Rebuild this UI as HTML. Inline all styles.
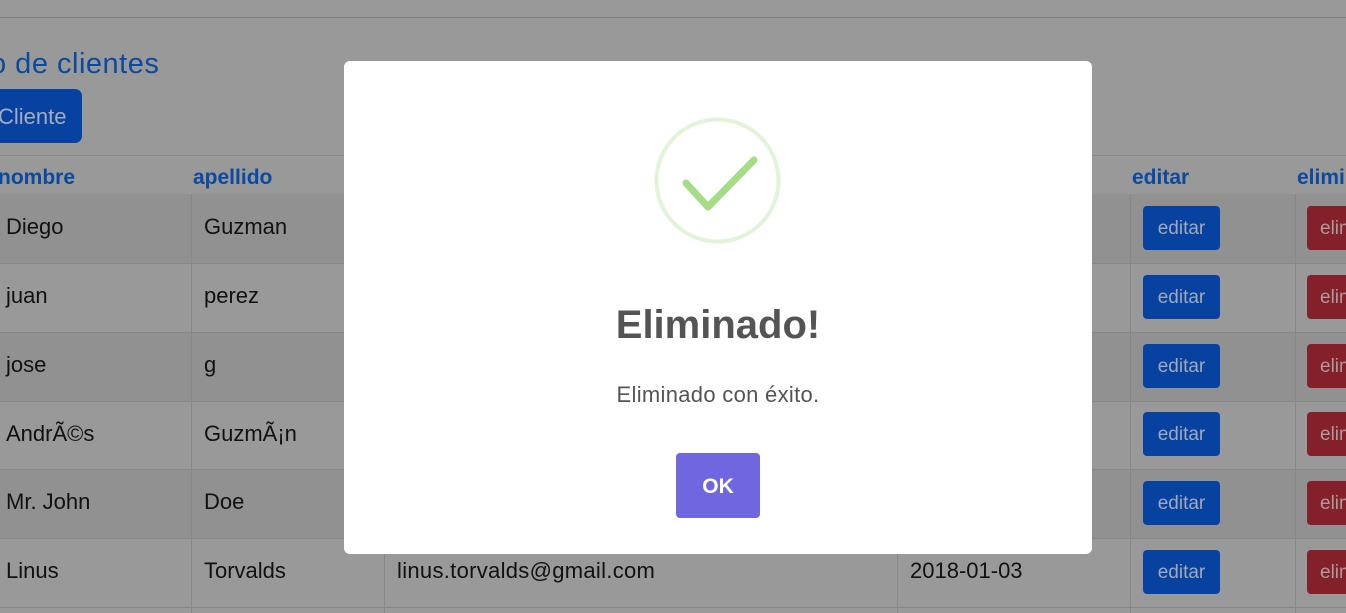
<!DOCTYPE html>
<html><head><meta charset="utf-8"><style>
*{box-sizing:border-box;margin:0;padding:0}
body{width:1346px;height:613px;overflow:hidden;background:#999;font-family:"Liberation Sans",sans-serif;position:relative}
.a{position:absolute;white-space:nowrap}
.hl{position:absolute;left:0;width:1346px;height:1px;background:#85888a}
.vl{position:absolute;width:1px;background:#85888a}
.row{position:absolute;left:0;width:1346px;height:69px}
.c{position:absolute;font-size:22px;color:#111;line-height:69px}
.th{position:absolute;top:162px;font-size:21px;font-weight:bold;color:#0b4aa0;line-height:32px}
.be{position:absolute;left:1143px;width:77px;height:44px;background:#0842a0;border-radius:4px;color:#9fa9bb;font-size:19px;text-align:center;line-height:46px}
.bd{position:absolute;left:1307px;width:60px;height:44px;background:#842029;border-radius:4px;color:#b09a9c;font-size:19px;line-height:46px;padding-left:13px}
</style></head><body>
<div class="hl" style="top:17px;background:#808080"></div>
<div class="a" style="left:-10px;top:48px;font-size:29px;color:#0b4aa0;letter-spacing:0.5px">o de clientes</div>
<div class="a" style="left:-20px;top:89px;width:102px;height:54px;background:#0842a0;border-radius:7px;color:#a3adc0;font-size:22px;line-height:56px;padding-left:18px">Cliente</div>
<div class="hl" style="top:155px"></div>
<div class="th" style="left:-2px">nombre</div>
<div class="th" style="left:193px">apellido</div>
<div class="th" style="left:1132px">editar</div>
<div class="th" style="left:1297px">elimi</div>
<div class="hl" style="top:194px"></div>

<div class="row" style="top:194px;background:#919191"></div>
<div class="row" style="top:332px;background:#919191"></div>
<div class="row" style="top:469px;background:#919191"></div>
<div class="hl" style="top:263px"></div><div class="hl" style="top:332px"></div><div class="hl" style="top:401px"></div><div class="hl" style="top:469px"></div><div class="hl" style="top:538px"></div><div class="hl" style="top:607px"></div>
<div class="vl" style="left:191px;top:194px;height:419px"></div>
<div class="vl" style="left:384px;top:194px;height:419px"></div>
<div class="vl" style="left:897px;top:194px;height:419px"></div>
<div class="vl" style="left:1130px;top:194px;height:419px"></div>
<div class="vl" style="left:1295px;top:194px;height:419px"></div>

<div class="c" style="left:6px;top:192px">Diego</div><div class="c" style="left:204px;top:192px">Guzman</div>
<div class="c" style="left:6px;top:261px">juan</div><div class="c" style="left:204px;top:261px">perez</div>
<div class="c" style="left:6px;top:330px">jose</div><div class="c" style="left:204px;top:330px">g</div>
<div class="c" style="left:6px;top:399px">AndrÃ©s</div><div class="c" style="left:204px;top:399px">GuzmÃ¡n</div>
<div class="c" style="left:6px;top:467px">Mr. John</div><div class="c" style="left:204px;top:467px">Doe</div>
<div class="c" style="left:6px;top:536px">Linus</div><div class="c" style="left:204px;top:536px">Torvalds</div>
<div class="c" style="left:397px;top:536px;letter-spacing:0.3px">linus.torvalds@gmail.com</div>
<div class="c" style="left:910px;top:536px">2018-01-03</div>

<div class="be" style="top:206px">editar</div><div class="bd" style="top:206px">elim</div>
<div class="be" style="top:275px">editar</div><div class="bd" style="top:275px">elim</div>
<div class="be" style="top:344px">editar</div><div class="bd" style="top:344px">elim</div>
<div class="be" style="top:412px">editar</div><div class="bd" style="top:412px">elim</div>
<div class="be" style="top:481px">editar</div><div class="bd" style="top:481px">elim</div>
<div class="be" style="top:550px">editar</div><div class="bd" style="top:550px">elim</div>

<div class="a" style="left:344px;top:61px;width:748px;height:493px;background:#fff;border-radius:6px">
<svg class="a" style="left:0;top:0" width="748" height="200">
<circle cx="373.5" cy="119.5" r="61" fill="none" stroke="#e3f3d9" stroke-width="4"/>
<polyline points="342,122 364,146 410,99" fill="none" stroke="#a5dc86" stroke-width="7" stroke-linecap="round" stroke-linejoin="round"/>
</svg>
<div class="a" style="left:0;width:748px;top:242px;text-align:center;font-size:40px;font-weight:bold;color:#545454">Eliminado!</div>
<div class="a" style="left:0;width:748px;top:321px;text-align:center;font-size:22px;color:#545454;letter-spacing:0.3px">Eliminado con éxito.</div>
<div class="a" style="left:332px;top:392px;width:84px;height:65px;background:#7066e0;border-radius:4px;color:#fff;font-size:21px;font-weight:bold;text-align:center;line-height:68px">OK</div>
</div>
</body></html>
